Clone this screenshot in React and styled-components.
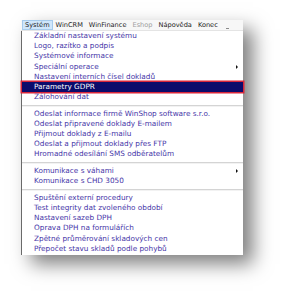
import React from "react";
import styled, { createGlobalStyle } from "styled-components";

const GlobalStyle = createGlobalStyle`
  html, body { margin: 0; padding: 0; background: #ffffff; }
  body { font-family: "DejaVu Sans", Verdana, sans-serif; }
`;

const Page = styled.div`
  width: 285px;
  height: 297px;
  padding: 20px 0 0 21px;
  box-sizing: border-box;
  overflow: hidden;
`;

const Window = styled.div`
  width: 222px;
  background: #ffffff;
  box-shadow: 10px 9px 18px rgba(0, 0, 0, 0.5);
`;

const MenuBar = styled.div`
  display: flex;
  align-items: center;
  height: 10px;
  padding-left: 1px;
  background: #f7f7f7;
  border-bottom: 1px solid #e4e4e4;
  position: relative;
`;

const BarItem = styled.div`
  font-size: 6.6px;
  line-height: 10px;
  padding: 0 3px;
  color: ${(p) => (p.$disabled ? "#a0a0a0" : "#222222")};
  background: ${(p) => (p.$active ? "#cfe6fb" : "transparent")};
  box-shadow: ${(p) => (p.$active ? "inset 0 0 0 1px #a6cbec" : "none")};
  white-space: nowrap;
`;

const MinButton = styled.div`
  position: absolute;
  right: 14px;
  bottom: 1px;
  width: 3px;
  height: 1px;
  background: #8a8a8a;
`;

const Dropdown = styled.div`
  border-left: 1px solid #6a6a6a;
  background: #ffffff;
  padding: 0 0 1px 0;
`;

const Item = styled.div`
  position: relative;
  height: 10.2px;
  line-height: 10.2px;
  padding-left: 12px;
  font-size: 7.3px;
  white-space: nowrap;
  color: ${(p) => (p.$selected ? "#ffffff" : "#4636a8")};
  background: ${(p) => (p.$selected ? "#0b0b6b" : "transparent")};
  box-shadow: ${(p) => (p.$selected ? "0 0 0 1.5px #d8253a" : "none")};
`;

const Arrow = styled.span`
  position: absolute;
  right: 5px;
  top: 3px;
  width: 0;
  height: 0;
  border-top: 2px solid transparent;
  border-bottom: 2px solid transparent;
  border-left: 2.5px solid #111;
`;

const Separator = styled.div`
  height: 6.4px;
  display: flex;
  align-items: center;
  &::after {
    content: "";
    flex: 1;
    height: 1px;
    background: #d4d4d4;
    border-bottom: 1px solid #f2f2f2;
  }
`;

const groups = [
  [
    { t: "Základní nastavení systému" },
    { t: "Logo, razítko a podpis" },
    { t: "Systémové informace" },
    { t: "Speciální operace", sub: true },
    { t: "Nastavení interních čísel dokladů" },
    { t: "Parametry GDPR", sel: true },
    { t: "Zálohování dat" },
  ],
  [
    { t: "Odeslat informace firmě WinShop software s.r.o." },
    { t: "Odeslat připravené doklady E-mailem" },
    { t: "Přijmout doklady z E-mailu" },
    { t: "Odeslat a přijmout doklady přes FTP" },
    { t: "Hromadné odesílání SMS odběratelům" },
  ],
  [
    { t: "Komunikace s váhami", sub: true },
    { t: "Komunikace s CHD 3050" },
  ],
  [
    { t: "Spuštění externí procedury" },
    { t: "Test integrity dat zvoleného období" },
    { t: "Nastavení sazeb DPH" },
    { t: "Oprava DPH na formulářích" },
    { t: "Zpětné průměrování skladových cen" },
    { t: "Přepočet stavu skladů podle pohybů" },
  ],
];

const barItems = [
  { t: "Systém", active: true },
  { t: "WinCRM" },
  { t: "WinFinance" },
  { t: "Eshop", disabled: true },
  { t: "Nápověda" },
  { t: "Konec" },
];

export default function App() {
  return (
    <>
      <GlobalStyle />
      <Page>
        <Window>
          <MenuBar>
            {barItems.map((b) => (
              <BarItem key={b.t} $active={b.active} $disabled={b.disabled}>
                {b.t}
              </BarItem>
            ))}
            <MinButton />
          </MenuBar>
          <Dropdown>
            {groups.map((g, gi) => (
              <React.Fragment key={gi}>
                {gi > 0 && <Separator />}
                {g.map((it) => (
                  <Item key={it.t} $selected={it.sel}>
                    {it.t}
                    {it.sub && <Arrow />}
                  </Item>
                ))}
              </React.Fragment>
            ))}
          </Dropdown>
        </Window>
      </Page>
    </>
  );
}
